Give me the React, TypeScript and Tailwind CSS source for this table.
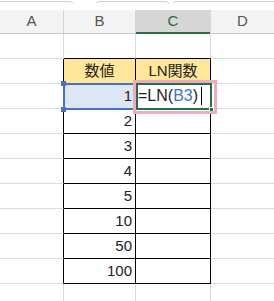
import React from 'react';

const values = [1, 2, 3, 4, 5, 10, 50, 100];

// t: -1 = empty row above table, 0 = header, 1..8 = values, 9 = empty row below
const rows = [-1, 0, 1, 2, 3, 4, 5, 6, 7, 8, 9];

const Row: React.FC<{ t: number }> = ({ t }) => {
  const inTable = t >= 0 && t <= 8;
  const topEdge = t >= -1 && t <= 8;
  const aCls = inTable ? 'border-r-[#000]' : 'border-r-[#dadada]';
  const bcR = inTable ? 'border-r-[#000]' : 'border-r-[#dadada]';
  const bcB = topEdge ? 'border-b-[#000]' : 'border-b-[#dadada]';
  const fill = t === 0 ? 'bg-[#ffe699]' : t === 1 ? 'bg-[#dce6f4]' : 'bg-white';

  return (
    <div className="flex h-[25px]">
      <div className={`w-[64px] shrink-0 border-r border-b border-b-[#dadada] ${aCls}`} />
      <div
        className={`w-[72px] shrink-0 border-r border-b ${bcR} ${bcB} ${fill} flex items-center ${
          t === 0 ? 'justify-center text-[15px]' : 'justify-end pr-[3px] text-[15px]'
        } text-[#222]`}
      >
        {t === 0 ? '数値' : inTable ? values[t - 1] : ''}
      </div>
      <div
        className={`w-[75px] shrink-0 border-r border-b ${bcR} ${bcB} ${t === 0 ? 'bg-[#ffe699] justify-center text-[15px]' : 'bg-white justify-start pl-[2px] text-[16px]'} flex items-center text-[#222]`}
      >
        {t === 0 && 'LN関数'}
        {t === 1 && (
          <span className="flex items-center">
            <span>=LN(</span>
            <span className="text-[#4472c4]">B3</span>
            <span>)</span>
            <span className="ml-[3px] w-px h-[18px] bg-black" />
          </span>
        )}
      </div>
      <div className="flex-1 border-b border-b-[#dadada]" />
    </div>
  );
};

const App: React.FC = () => {
  return (
    <div className="relative w-[274px] h-[301px] overflow-hidden bg-white font-['Liberation_Sans','Noto_Sans_CJK_JP',sans-serif]">
      {/* ribbon bottom edge */}
      <div className="h-[10px] relative">
        <svg className="absolute inset-0" width="274" height="10" viewBox="0 0 274 10">
          <path d="M0 1.5 H70 Q72 1.5 73 3.5 M96 3.5 Q97 1.5 99 1.5 H166 Q168 1.5 169 3.5 M173 3.5 Q174 1.5 176 1.5 H274" stroke="#cfcfcf" strokeWidth="1" fill="none" />
        </svg>
      </div>

      {/* column headers */}
      <div className="flex h-[24px] bg-[#f3f3f3] border-b border-[#c8c8c8] text-[15px] text-[#555]">
        <div className="w-[64px] flex items-center justify-center border-r border-[#d4d4d4]">A</div>
        <div className="w-[72px] flex items-center justify-center border-r border-[#d4d4d4]">B</div>
        <div className="w-[75px] flex items-center justify-center border-r border-[#d4d4d4] bg-[#d6d6d6] text-[#1e6b41] relative">
          C
          <div className="absolute left-0 right-0 bottom-[-1px] h-[2px] bg-[#217346]" />
        </div>
        <div className="flex-1 flex items-center justify-center">D</div>
      </div>

      {rows.map(t => (
        <Row key={t} t={t} />
      ))}

      {/* reference highlight on B (value 1) */}
      <div className="absolute left-[63px] top-[83px] w-[74px] h-[27px] border-2 border-[#4472c4]" />
      <div className="absolute left-[61px] top-[81px] w-[5px] h-[5px] bg-[#4472c4]" />
      <div className="absolute left-[61px] top-[107px] w-[5px] h-[5px] bg-[#4472c4]" />

      {/* active cell */}
      <div className="absolute left-[136px] top-[83px] w-[76px] h-[27px] border-2 border-[#217346]" />
      <div className="absolute left-[209px] top-[107px] w-[5px] h-[5px] bg-[#217346] border border-white" />

      {/* annotation box */}
      <div className="absolute left-[133px] top-[80px] w-[84px] h-[34px] border-[3px] border-[#f2a9c4]" />
    </div>
  );
};

export default App;
